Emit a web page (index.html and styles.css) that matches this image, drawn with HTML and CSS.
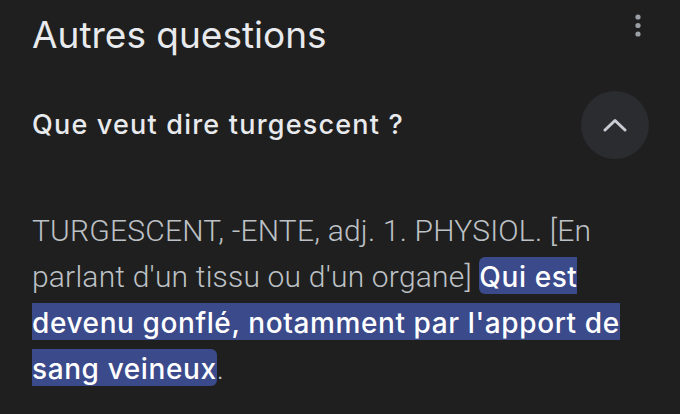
FILE: index.html
```html
<!DOCTYPE html>
<html lang="fr">
<head>
<meta charset="utf-8">
<link rel="stylesheet" href="styles.css">
</head>
<body>
<div class="page">
  <div class="header">
    <h1 class="title">Autres questions</h1>
    <svg class="more" width="6" height="24" viewBox="0 0 6 24"><circle cx="3" cy="3" r="2.6" fill="#9aa0a6"/><circle cx="3" cy="11.5" r="2.6" fill="#9aa0a6"/><circle cx="3" cy="20" r="2.6" fill="#9aa0a6"/></svg>
  </div>
  <div class="question">
    <div class="q-text">Que veut dire turgescent ?</div>
    <div class="toggle">
      <svg width="24" height="14" viewBox="0 0 24 14"><path d="M2 12 L12 2.5 L22 12" fill="none" stroke="#c8ccd4" stroke-width="3" stroke-linecap="round" stroke-linejoin="round"/></svg>
    </div>
  </div>
  <p class="answer">TURGESCENT, -ENTE, adj. 1. PHYSIOL. [En parlant d'un tissu ou d'un organe] <span class="hl">Qui est devenu gonflé, notamment par l'apport de sang veineux</span>.</p>
</div>
</body>
</html>
```

FILE: styles.css
```css
html, body {
  margin: 0;
  padding: 0;
  background: #1f1f1f;
}
.page {
  width: 680px;
  height: 414px;
  box-sizing: border-box;
  padding: 0 31px 0 32px;
  font-family: Roboto, "Noto Sans", sans-serif;
  overflow: hidden;
}
.header {
  display: flex;
  justify-content: space-between;
  align-items: flex-start;
}
.title {
  margin: 12px 0 0;
  font-family: Inter, Roboto, sans-serif;
  font-size: 37px;
  line-height: 46px;
  font-weight: 400;
  color: #e8eaed;
}
.more {
  margin: 14px 8px 0 0;
}
.question {
  margin-top: 33px;
  display: flex;
  justify-content: space-between;
  align-items: center;
}
.q-text {
  font-family: Inter, Roboto, sans-serif;
  font-size: 27px;
  line-height: 32px;
  font-weight: 500;
  letter-spacing: 1.2px;
  color: #e8eaed;
}
.toggle {
  width: 68px;
  height: 68px;
  border-radius: 50%;
  background: #2b2c30;
  display: flex;
  align-items: center;
  justify-content: center;
}
.answer {
  margin: 49px 0 0;
  font-size: 30px;
  line-height: 46px;
  font-weight: 300;
  letter-spacing: 0.2px;
  color: #bdc1c6;
}
.hl {
  font-family: Inter, Roboto, sans-serif;
  font-size: 28px;
  letter-spacing: 0.6px;
  background: #3a4a8b;
  color: #ffffff;
  font-weight: 500;
  border-radius: 6px;
  padding: 3px 0 0;
}
```
